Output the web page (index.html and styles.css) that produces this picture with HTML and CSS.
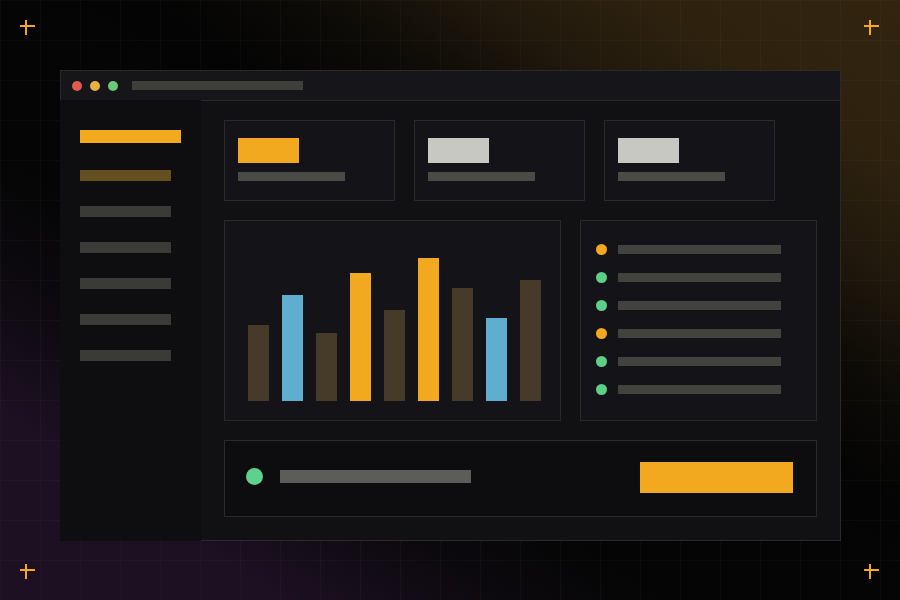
FILE: index.html
```html
<!DOCTYPE html>
<html lang="en">
<head>
<meta charset="utf-8">
<title>Dashboard</title>
<link rel="stylesheet" href="styles.css">
</head>
<body>
<div class="stage">
  <span class="cross cross-tl"></span>
  <span class="cross cross-tr"></span>
  <span class="cross cross-bl"></span>
  <span class="cross cross-br"></span>

  <div class="window">
    <div class="titlebar">
      <span class="tdot tdot-red"></span>
      <span class="tdot tdot-yellow"></span>
      <span class="tdot tdot-green"></span>
      <span class="address"></span>
    </div>
    <div class="body">
      <nav class="sidebar">
        <span class="nav-item nav-active"></span>
        <span class="nav-item nav-hover"></span>
        <span class="nav-item"></span>
        <span class="nav-item"></span>
        <span class="nav-item"></span>
        <span class="nav-item"></span>
        <span class="nav-item"></span>
      </nav>
      <main class="main">
        <div class="stats">
          <div class="card stat">
            <span class="stat-value stat-accent"></span>
            <span class="stat-label"></span>
          </div>
          <div class="card stat">
            <span class="stat-value"></span>
            <span class="stat-label"></span>
          </div>
          <div class="card stat">
            <span class="stat-value"></span>
            <span class="stat-label"></span>
          </div>
        </div>
        <div class="middle">
          <div class="card chart">
            <span class="bar bar-muted" style="height:76px"></span>
            <span class="bar bar-blue" style="height:106px"></span>
            <span class="bar bar-muted" style="height:68px"></span>
            <span class="bar bar-orange" style="height:128px"></span>
            <span class="bar bar-muted" style="height:91px"></span>
            <span class="bar bar-orange" style="height:143px"></span>
            <span class="bar bar-muted" style="height:113px"></span>
            <span class="bar bar-blue" style="height:83px"></span>
            <span class="bar bar-muted" style="height:121px"></span>
          </div>
          <div class="card list">
            <div class="row"><span class="dot dot-orange"></span><span class="line"></span></div>
            <div class="row"><span class="dot dot-green"></span><span class="line"></span></div>
            <div class="row"><span class="dot dot-green"></span><span class="line"></span></div>
            <div class="row"><span class="dot dot-orange"></span><span class="line"></span></div>
            <div class="row"><span class="dot dot-green"></span><span class="line"></span></div>
            <div class="row"><span class="dot dot-green"></span><span class="line"></span></div>
          </div>
        </div>
        <div class="card footer">
          <span class="status-dot"></span>
          <span class="status-line"></span>
          <span class="action"></span>
        </div>
      </main>
    </div>
  </div>
</div>
</body>
</html>
```

FILE: styles.css
```css
* { box-sizing: border-box; }

html, body {
  margin: 0;
  padding: 0;
  width: 900px;
  height: 600px;
  overflow: hidden;
  font-family: "Liberation Sans", Arial, sans-serif;
  background: #050505;
}

.stage {
  position: relative;
  width: 900px;
  height: 600px;
  padding: 70px 0 0 60px;
  background-color: #050505;
  background-image:
    linear-gradient(to right, rgba(255,255,255,0.025) 1px, transparent 1px),
    linear-gradient(to bottom, rgba(255,255,255,0.025) 1px, transparent 1px),
    linear-gradient(34deg,
      #1c1022 0%, #1c1022 16%, #0c090e 28%, #050505 37%,
      #040404 58%, #0d0b07 67%, #21190c 77%, #2e220f 86%, #32240f 100%);
  background-size: 40px 40px, 40px 40px, 100% 100%;
  background-position: 0 0, 0 0, 0 0;
}

.cross {
  position: absolute;
  width: 15px;
  height: 15px;
}
.cross::before,
.cross::after {
  content: "";
  position: absolute;
  background: #f4a81e;
}
.cross::before { left: 0; top: 5px; width: 15px; height: 2px; }
.cross::after { left: 5px; top: 0; width: 2px; height: 15px; }
.cross-tl { left: 20px; top: 20px; }
.cross-tr { left: 864px; top: 20px; }
.cross-bl { left: 20px; top: 564px; }
.cross-br { left: 864px; top: 564px; }

.window {
  width: 781px;
  height: 471px;
  display: flex;
  flex-direction: column;
}

.titlebar {
  height: 30px;
  flex: none;
  display: flex;
  align-items: center;
  padding-left: 11px;
  background: #15151a;
  border: 1px solid #2a2a2c;
  border-bottom: none;
}
.tdot {
  width: 10px;
  height: 10px;
  border-radius: 50%;
  margin-right: 8px;
}
.tdot-red { background: #e05a4f; }
.tdot-yellow { background: #e8b23c; }
.tdot-green { background: #6ac87a; margin-right: 14px; }
.address {
  width: 171px;
  height: 9px;
  background: #3e3e3a;
}

.body {
  flex: 1;
  display: flex;
}

.sidebar {
  width: 141px;
  flex: none;
  background: #0e0e10;
  display: flex;
  flex-direction: column;
  align-items: flex-start;
  padding: 30px 0 0 20px;
  gap: 25px;
}
.nav-item {
  display: block;
  width: 91px;
  height: 11px;
  background: #3a3a36;
}
.nav-active {
  width: 101px;
  height: 13px;
  background: #f2a81f;
  margin-bottom: 2px;
}
.nav-hover { background: #634f20; }

.main {
  width: 640px;
  flex: none;
  background: #111113;
  border: 1px solid #2a2a2a;
  border-left: none;
  padding: 19px 23px 0 23px;
  display: flex;
  flex-direction: column;
  gap: 19px;
}

.card {
  border: 1px solid #2a2a28;
  background: #141418;
}

.stats {
  display: flex;
  gap: 19px;
}
.stat {
  width: 171px;
  height: 81px;
  padding: 17px 0 0 13px;
  display: flex;
  flex-direction: column;
  align-items: flex-start;
  gap: 9px;
}
.stat-value {
  display: block;
  width: 61px;
  height: 25px;
  background: #c8c8c2;
}
.stat-accent { background: #f2a81f; }
.stat-label {
  display: block;
  width: 107px;
  height: 9px;
  background: #4a4a46;
}

.middle {
  display: flex;
  gap: 19px;
}

.chart {
  width: 337px;
  height: 201px;
  display: flex;
  align-items: flex-end;
  gap: 13px;
  padding: 0 0 19px 23px;
}
.bar {
  display: block;
  width: 21px;
}
.bar-muted { background: #463b28; }
.bar-blue { background: #5faed0; }
.bar-orange { background: #f2a81f; }

.list {
  width: 237px;
  height: 201px;
  padding: 23px 0 0 15px;
  display: flex;
  flex-direction: column;
  gap: 17px;
}
.row {
  display: flex;
  align-items: center;
  height: 11px;
  gap: 11px;
}
.dot {
  width: 11px;
  height: 11px;
  border-radius: 50%;
  flex: none;
}
.dot-orange { background: #f2a81f; }
.dot-green { background: #5ccf8b; }
.line {
  display: block;
  width: 163px;
  height: 9px;
  background: #42423e;
}

.footer {
  width: 593px;
  height: 77px;
  background: #0d0d0f;
  display: flex;
  align-items: flex-start;
  padding: 21px 23px 0 21px;
}
.status-dot {
  width: 17px;
  height: 17px;
  border-radius: 50%;
  background: #5fd18e;
  margin-top: 6px;
  flex: none;
}
.status-line {
  width: 191px;
  height: 13px;
  background: #5c5c58;
  margin: 8px 0 0 17px;
}
.action {
  width: 153px;
  height: 31px;
  background: #f2a81f;
  margin-left: auto;
}
```
